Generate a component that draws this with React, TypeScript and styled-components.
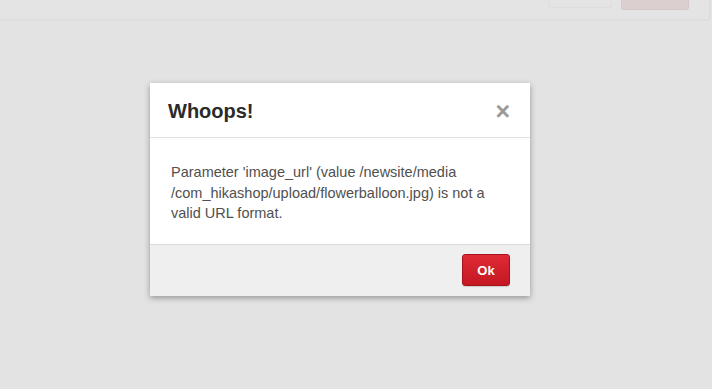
import styled, { createGlobalStyle } from 'styled-components';

const GlobalStyle = createGlobalStyle`
  html, body {
    margin: 0;
    padding: 0;
    background: #e2e3e2;
    font-family: "Liberation Sans", Arial, sans-serif;
  }
`;

const Page = styled.div`
  width: 712px;
  height: 389px;
  background: #e2e3e2;
  overflow: hidden;
  display: flex;
  flex-direction: column;
`;

const TopBar = styled.div`
  height: 19px;
  margin-right: 2px;
  background: #e3e4e3;
  border-right: 1px solid #dadbda;
  box-shadow: 0 1px 2px rgba(0, 0, 0, 0.05);
  display: flex;
  justify-content: flex-end;
  align-items: flex-start;
  gap: 9px;
  padding-right: 20px;
`;

const GhostButton = styled.div<{ $variant?: 'danger' }>`
  width: ${(p) => (p.$variant ? '66px' : '62px')};
  height: ${(p) => (p.$variant ? '9px' : '7px')};
  border-radius: 0 0 3px 3px;
  background: ${(p) => (p.$variant ? '#dccfd0' : '#e3e4e3')};
  border: 1px solid ${(p) => (p.$variant ? '#d6c8c9' : '#dcdddc')};
  border-top: none;
`;

const Overlay = styled.div`
  flex: 1;
  padding: 64px 0 0 150px;
`;

const Modal = styled.div`
  width: 380px;
  background: #ffffff;
  box-shadow: 0 2px 6px rgba(0, 0, 0, 0.35);
`;

const Header = styled.div`
  height: 54px;
  padding: 0 20px 0 18px;
  border-bottom: 1px solid #e2e2e2;
  display: flex;
  align-items: center;
  justify-content: space-between;
`;

const Title = styled.h3`
  margin: 0;
  padding-top: 2px;
  font-size: 20px;
  font-weight: 700;
  color: #2b2b2b;
`;

const Close = styled.span`
  font-size: 25px;
  font-weight: 700;
  color: #9a9a9a;
  line-height: 1;
  margin-top: 2px;
`;

const Body = styled.div`
  padding: 24px 21px 0 21px;
  font-size: 14.5px;
  line-height: 20.5px;
  color: #505050;
  height: 106px;
  box-sizing: border-box;
`;

const Footer = styled.div`
  height: 52px;
  box-sizing: border-box;
  background: #efefef;
  border-top: 1px solid #d9d9d9;
  display: flex;
  align-items: center;
  justify-content: flex-end;
  padding: 0 20px 0 0;
`;

const OkButton = styled.button`
  width: 48px;
  height: 32px;
  border-radius: 3px;
  border: 1px solid #a5121b;
  background: linear-gradient(#de2a35, #c41822);
  color: #ffffff;
  font-family: "Liberation Sans", Arial, sans-serif;
  font-size: 13px;
  font-weight: 700;
  box-shadow: 0 1px 1px rgba(0, 0, 0, 0.15);
  margin-bottom: 1px;
`;

export default function App() {
  return (
    <Page>
      <GlobalStyle />
      <TopBar>
        <GhostButton />
        <GhostButton $variant="danger" />
      </TopBar>
      <Overlay>
        <Modal>
          <Header>
            <Title>Whoops!</Title>
            <Close>×</Close>
          </Header>
          <Body>
            Parameter 'image_url' (value /newsite/media
            <br />
            /com_hikashop/upload/flowerballoon.jpg) is not a
            <br />
            valid URL format.
          </Body>
          <Footer>
            <OkButton>Ok</OkButton>
          </Footer>
        </Modal>
      </Overlay>
    </Page>
  );
}
